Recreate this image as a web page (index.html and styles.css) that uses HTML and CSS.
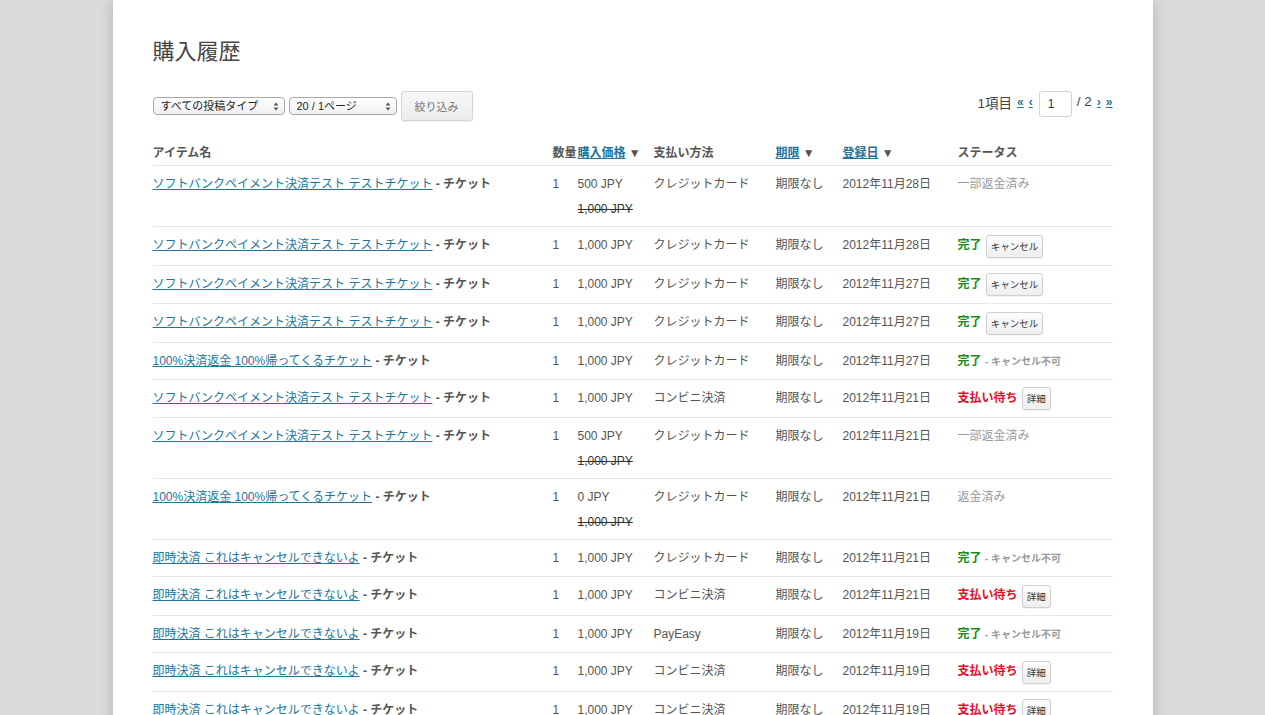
FILE: index.html
```html
<!DOCTYPE html>
<html lang="ja">
<head>
<meta charset="utf-8">
<title>購入履歴</title>
<link rel="stylesheet" href="styles.css">
</head>
<body>
<div class="panel">
  <h1 class="title">購入履歴</h1>
  <div class="toolbar">
    <div class="filters">
      <span class="sel sel-type">
        <select><option>すべての投稿タイプ</option></select>
        <svg class="arrows" width="6" height="9" viewBox="0 0 6 9"><path d="M3 0.5 L5.5 3.5 L0.5 3.5 Z M3 8.5 L5.5 5.5 L0.5 5.5 Z" fill="#555"/></svg>
      </span>
      <span class="sel sel-page">
        <select><option>20 / 1ページ</option></select>
        <svg class="arrows" width="6" height="9" viewBox="0 0 6 9"><path d="M3 0.5 L5.5 3.5 L0.5 3.5 Z M3 8.5 L5.5 5.5 L0.5 5.5 Z" fill="#555"/></svg>
      </span>
      <button class="btn-filter">絞り込み</button>
    </div>
    <div class="pager">
      <span class="ptxt">1項目</span>
      <a href="#" class="plink">«</a>
      <a href="#" class="plink">‹</a>
      <input class="pinput" type="text" value="1">
      <span class="ptxt">/ 2</span>
      <a href="#" class="plink">›</a>
      <a href="#" class="plink">»</a>
    </div>
  </div>

  <table class="orders">
    <colgroup>
      <col class="c-item"><col class="c-qty"><col class="c-price"><col class="c-pay"><col class="c-limit"><col class="c-date"><col class="c-status">
    </colgroup>
    <thead>
      <tr>
        <th>アイテム名</th>
        <th>数量</th>
        <th><a href="#">購入価格</a> ▼</th>
        <th>支払い方法</th>
        <th><a href="#">期限</a> ▼</th>
        <th><a href="#">登録日</a> ▼</th>
        <th>ステータス</th>
      </tr>
    </thead>
    <tbody>
      <tr>
        <td><a href="#">ソフトバンクペイメント決済テスト テストチケット</a> <b>- チケット</b></td>
        <td>1</td>
        <td>500 JPY<del>1,000 JPY</del></td>
        <td>クレジットカード</td><td>期限なし</td><td>2012年11月28日</td>
        <td><span class="st-grey">一部返金済み</span></td>
      </tr>
      <tr>
        <td><a href="#">ソフトバンクペイメント決済テスト テストチケット</a> <b>- チケット</b></td>
        <td>1</td><td>1,000 JPY</td>
        <td>クレジットカード</td><td>期限なし</td><td>2012年11月28日</td>
        <td><span class="st-ok">完了</span> <button class="sbtn">キャンセル</button></td>
      </tr>
      <tr>
        <td><a href="#">ソフトバンクペイメント決済テスト テストチケット</a> <b>- チケット</b></td>
        <td>1</td><td>1,000 JPY</td>
        <td>クレジットカード</td><td>期限なし</td><td>2012年11月27日</td>
        <td><span class="st-ok">完了</span> <button class="sbtn">キャンセル</button></td>
      </tr>
      <tr>
        <td><a href="#">ソフトバンクペイメント決済テスト テストチケット</a> <b>- チケット</b></td>
        <td>1</td><td>1,000 JPY</td>
        <td>クレジットカード</td><td>期限なし</td><td>2012年11月27日</td>
        <td><span class="st-ok">完了</span> <button class="sbtn">キャンセル</button></td>
      </tr>
      <tr>
        <td><a href="#">100%決済返金 100%帰ってくるチケット</a> <b>- チケット</b></td>
        <td>1</td><td>1,000 JPY</td>
        <td>クレジットカード</td><td>期限なし</td><td>2012年11月27日</td>
        <td><span class="st-ok">完了</span> <span class="note">- キャンセル不可</span></td>
      </tr>
      <tr>
        <td><a href="#">ソフトバンクペイメント決済テスト テストチケット</a> <b>- チケット</b></td>
        <td>1</td><td>1,000 JPY</td>
        <td>コンビニ決済</td><td>期限なし</td><td>2012年11月21日</td>
        <td><span class="st-wait">支払い待ち</span> <button class="sbtn">詳細</button></td>
      </tr>
      <tr>
        <td><a href="#">ソフトバンクペイメント決済テスト テストチケット</a> <b>- チケット</b></td>
        <td>1</td>
        <td>500 JPY<del>1,000 JPY</del></td>
        <td>クレジットカード</td><td>期限なし</td><td>2012年11月21日</td>
        <td><span class="st-grey">一部返金済み</span></td>
      </tr>
      <tr>
        <td><a href="#">100%決済返金 100%帰ってくるチケット</a> <b>- チケット</b></td>
        <td>1</td>
        <td>0 JPY<del>1,000 JPY</del></td>
        <td>クレジットカード</td><td>期限なし</td><td>2012年11月21日</td>
        <td><span class="st-grey">返金済み</span></td>
      </tr>
      <tr>
        <td><a href="#">即時決済 これはキャンセルできないよ</a> <b>- チケット</b></td>
        <td>1</td><td>1,000 JPY</td>
        <td>クレジットカード</td><td>期限なし</td><td>2012年11月21日</td>
        <td><span class="st-ok">完了</span> <span class="note">- キャンセル不可</span></td>
      </tr>
      <tr>
        <td><a href="#">即時決済 これはキャンセルできないよ</a> <b>- チケット</b></td>
        <td>1</td><td>1,000 JPY</td>
        <td>コンビニ決済</td><td>期限なし</td><td>2012年11月21日</td>
        <td><span class="st-wait">支払い待ち</span> <button class="sbtn">詳細</button></td>
      </tr>
      <tr>
        <td><a href="#">即時決済 これはキャンセルできないよ</a> <b>- チケット</b></td>
        <td>1</td><td>1,000 JPY</td>
        <td>PayEasy</td><td>期限なし</td><td>2012年11月19日</td>
        <td><span class="st-ok">完了</span> <span class="note">- キャンセル不可</span></td>
      </tr>
      <tr>
        <td><a href="#">即時決済 これはキャンセルできないよ</a> <b>- チケット</b></td>
        <td>1</td><td>1,000 JPY</td>
        <td>コンビニ決済</td><td>期限なし</td><td>2012年11月19日</td>
        <td><span class="st-wait">支払い待ち</span> <button class="sbtn">詳細</button></td>
      </tr>
      <tr>
        <td><a href="#">即時決済 これはキャンセルできないよ</a> <b>- チケット</b></td>
        <td>1</td><td>1,000 JPY</td>
        <td>コンビニ決済</td><td>期限なし</td><td>2012年11月19日</td>
        <td><span class="st-wait">支払い待ち</span> <button class="sbtn">詳細</button></td>
      </tr>
    </tbody>
  </table>
</div>
</body>
</html>
```

FILE: styles.css
```css
html, body {
  margin: 0;
  padding: 0;
}
body {
  background: #dadada;
  font-family: "Liberation Sans", "Noto Sans CJK JP", sans-serif;
  color: #555;
  font-size: 12px;
  overflow: hidden;
}
.panel {
  width: 960px;
  margin: 0 auto;
  padding: 37px 40px 40px;
  background: #fff;
  box-shadow: 0 0 12px rgba(0, 0, 0, 0.18);
  min-height: 800px;
}
.title {
  margin: 0;
  font-size: 22px;
  line-height: 30px;
  font-weight: normal;
  color: #464646;
}
.toolbar {
  margin-top: 24px;
  display: flex;
  justify-content: space-between;
  align-items: flex-start;
}
.filters {
  display: flex;
  align-items: center;
  gap: 4px;
  height: 30px;
}
.sel {
  position: relative;
  display: inline-block;
}
.sel select {
  appearance: none;
  -webkit-appearance: none;
  display: block;
  height: 18px;
  margin: 0;
  padding: 0 0 0 7px;
  border: 1px solid #a7a7a7;
  border-radius: 4px;
  background: linear-gradient(#ffffff, #f0f0f0);
  font-family: "Liberation Sans", "Noto Sans CJK JP", sans-serif;
  font-size: 11px;
  line-height: 16px;
  color: #222;
}
.sel-type select { width: 132px; }
.sel-page select { width: 108px; }
.sel .arrows {
  position: absolute;
  right: 6px;
  top: 5px;
}
.btn-filter {
  width: 72px;
  height: 30px;
  margin: 0;
  padding: 0;
  border: 1px solid #d4d4d4;
  border-radius: 3px;
  background: linear-gradient(#f7f7f7, #ececec);
  color: #777;
  font-family: "Liberation Sans", "Noto Sans CJK JP", sans-serif;
  font-size: 11px;
  box-shadow: 0 1px 1px rgba(0,0,0,0.06);
}
.pager {
  display: flex;
  align-items: center;
  gap: 5px;
  font-size: 13px;
  color: #444;
  height: 26px;
}
.ptxt, .plink {
  margin-bottom: 5px;
}
.ptxt {
  font-size: 13.5px;
}
.plink {
  color: #21759b;
  font-size: 12px;
  font-weight: bold;
}
.pinput {
  width: 33px;
  height: 26px;
  box-sizing: border-box;
  margin: 0 0 0 1px;
  padding: 0 8px;
  border: 1px solid #d4d4d4;
  border-radius: 3px;
  font-family: "Liberation Sans", "Noto Sans CJK JP", sans-serif;
  font-size: 12px;
  color: #333;
}
.orders {
  margin-top: 14px;
  width: 960px;
  table-layout: fixed;
  border-collapse: collapse;
}
.c-item { width: 400px; }
.c-qty { width: 25px; }
.c-price { width: 76px; }
.c-pay { width: 122px; }
.c-limit { width: 67px; }
.c-date { width: 115px; }
.c-status { width: 155px; }
.orders th {
  text-align: left;
  font-weight: bold;
  color: #555;
  padding: 8px 0 2px;
  line-height: 20px;
  white-space: nowrap;
  border-bottom: 1px solid #e8e8e8;
}
.orders td {
  padding: 8px 0 7px;
  line-height: 20px;
  vertical-align: top;
  white-space: nowrap;
  border-bottom: 1px solid #e8e8e8;
}
.orders a {
  color: #21759b;
  text-decoration: underline;
}
.orders b {
  color: #555;
}
.orders del {
  display: block;
  margin-top: 5px;
  color: #333;
}
.st-grey { color: #999; }
.st-ok { color: #1a8a1a; font-weight: bold; }
.st-wait { color: #e0112b; font-weight: bold; }
.note {
  color: #999;
  font-size: 10px;
  font-weight: bold;
}
.sbtn {
  height: 23px;
  margin: -0.4px 0 0 1px;
  padding: 0 4px;
  border: 1px solid #cfcfcf;
  border-radius: 3px;
  background: linear-gradient(#fdfdfd, #eeeeee);
  color: #333;
  font-family: "Liberation Sans", "Noto Sans CJK JP", sans-serif;
  font-size: 9.5px;
  line-height: 21px;
  vertical-align: top;
  box-shadow: 0 1px 1px rgba(0,0,0,0.05);
}
```
